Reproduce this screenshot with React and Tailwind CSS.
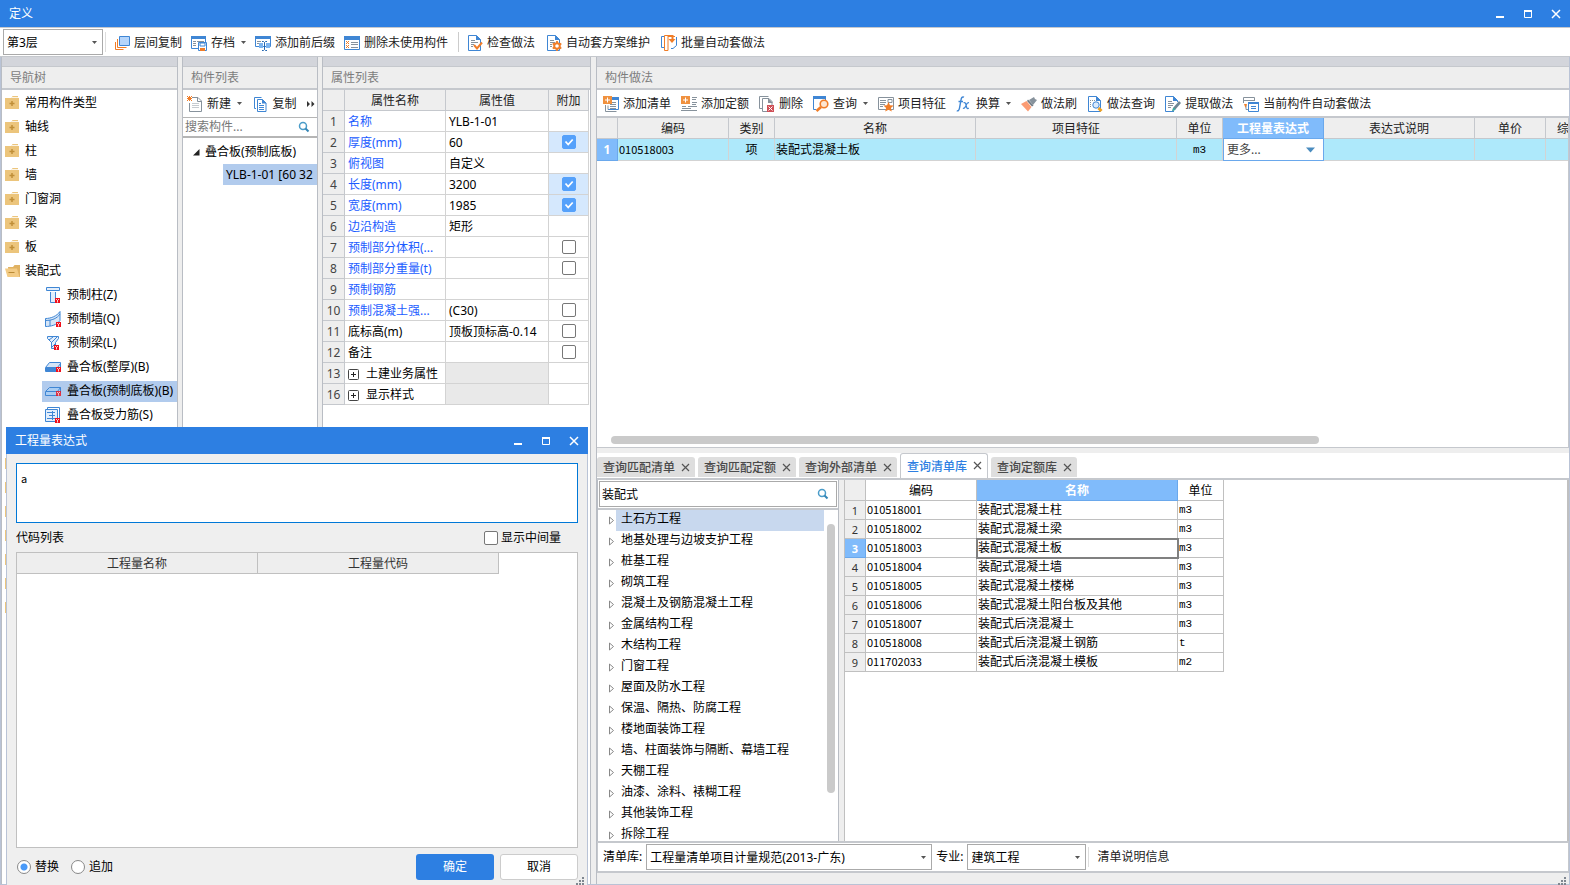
import React from "react";

const B = "#3f86d4";
const O = "#f07d28";
const G = "#87929c";

function Svg({ children, w = 16, h = 16, className = "" }) {
  return (
    <svg width={w} height={h} viewBox={`0 0 ${w} ${h}`} fill="none" className={`shrink-0 ${className}`} aria-hidden="true">
      {children}
    </svg>
  );
}

const Caret = ({ className = "text-[#555]" }) => (
  <svg width="5" height="3" viewBox="0 0 5 3" className={`shrink-0 ${className}`} aria-hidden="true">
    <path d="M0 0h5L2.500 3z" fill="currentColor" />
  </svg>
);

const page = "M1.500 .5h8l4 4v11h-12z";

const icons = {
  floorCopy: (
    <Svg>
      <path d="M5.500 1.500h10v9h-10z" fill="#b5d5fb" stroke={B} />
      <path d="M3.500 4v8.500h9M1.500 7v7.500h8" stroke={O} />
    </Svg>
  ),
  archive: (
    <Svg>
      <path d="M.5 1.500h14v12H.5z" fill="#fff" stroke={B} />
      <path d="M0 1h15v3H0z" fill={B} />
      <path d="M2 6.500h3M2 8.500h3M2 10.500h3M6 6.500h7" stroke={G} />
      <path d="M7.500 7.500h8v8h-8z" fill="#fff" stroke={B} />
      <path d="M9 8h5v3H9z" fill="#fff" stroke={B} />
      <path d="M9 13h5v3H9z" fill={O} />
    </Svg>
  ),
  affix: (
    <Svg>
      <path d="M.5 1.500h15v10H.5z" fill="#fff" stroke={B} />
      <path d="M0 1h16v3H0z" fill={B} />
      <path d="M2 6.500h4M2 8.500h3" stroke={G} />
      <path d="M4 8h4v5H4zM11 8h4v5h-4z" fill="#7db4ee" />
      <path d="M7 6.500h1.500l1 1 1-1H12M9.500 7.500v7M7 15.500h1.500l1-1 1 1H12" stroke="#2466b0" />
    </Svg>
  ),
  unused: (
    <Svg>
      <path d="M.5 1.500h15v13H.5z" fill="#fff" stroke={B} />
      <path d="M0 1h16v4H0z" fill={B} />
      <path d="M2 6h1v1H2zM4 6h1v1H4zM3 7h1v1H3zM2 8h1v1H2zM4 8h1v1H4zM2 10h1v1H2zM4 10h1v1H4zM3 11h1v1H3zM2 12h1v1H2zM4 12h1v1H4z" fill={O} />
      <path d="M7 7.500h7M7 9.500h7M7 12.500h7" stroke={G} />
    </Svg>
  ),
  check: (
    <Svg>
      <path d={page} fill="#fff" stroke={B} />
      <path d="M9 0l5 5H9z" fill={B} />
      <path d="M4 5.500h4M4 7.500h7M4 9.500h3M4 11.500h2" stroke={G} />
      <path d="M7 10l3 3.500 5-6" stroke={O} strokeWidth="2" />
    </Svg>
  ),
  gearDoc: (
    <Svg>
      <path d={page} fill="#fff" stroke={B} />
      <path d="M9 0l5 5H9z" fill={B} />
      <path d="M4 5.500h4M4 7.500h5M4 9.500h2M4 11.500h2" stroke={G} />
      <circle cx="11" cy="11" r="2.800" fill="#fff" stroke={O} strokeWidth="2" />
      <path d="M11 6v2M11 14v2M6.700 8.500l1.600 1M13.700 12.500l1.600 1M6.700 13.500l1.600-1M13.700 9.500l1.600-1" stroke={O} strokeWidth="1.800" />
    </Svg>
  ),
  batch: (
    <Svg>
      <path d="M3 1.500H.5v11H3M10 13.500h2l3.500-3V2" stroke={B} />
      <path d="M3.500.5H7v15H3.500zM7 1.500h7" stroke={O} />
      <path d="M7 .5h4.500v4" stroke={O} strokeWidth="2" />
      <path d="M7.500 4h7L11 8z" fill={O} />
    </Svg>
  ),
  addList: (
    <Svg>
      <path d="M10 1.500h5.500v12H5" stroke={B} />
      <path d="M9 1h7v3H9z" fill={B} />
      <path d="M2.500 9v6.500h11" stroke={G} />
      <path d="M5 9.500v4M7 10.500h6M7 8.500h6M9 6.500h4M7 12.500h6" stroke={G} />
      <path d="M0 0h9v8H0z" fill="#f0913f" />
      <path d="M4.500 1.500v5M2 4h5" stroke="#fff" />
    </Svg>
  ),
  addQuota: (
    <Svg>
      <path d="M11 1.500h5M11 3.500h4M11 6.500h5M11 8.500h4M1 10.500h4M7 10.500h9M1 12.500h9M0 14.500h16" stroke={G} />
      <path d="M0 0h9v8H0z" fill="#f0913f" />
      <path d="M4.500 1.500v5M2 4h5" stroke="#fff" />
    </Svg>
  ),
  remove: (
    <Svg>
      <path d="M3 12.500H.5V.5h9" stroke={G} />
      <path d="M9 15.500H3.500V2.500H10l3 3V9" fill="#fff" stroke={G} />
      <path d="M9 2l5 5H9z" fill={G} />
      <path d="M8 9h7v7H8z" fill="#cf4f57" />
      <path d="M9.500 10.500l4 4M13.500 10.500l-4 4" stroke="#fff" />
    </Svg>
  ),
  query: (
    <Svg>
      <path d="M3 13.500H.5V1.500h12V4" stroke={B} />
      <path d="M0 0h13v3H0z" fill={B} />
      <circle cx="11" cy="8" r="3.800" fill="#fde6d2" stroke={O} strokeWidth="1.600" />
      <path d="M8 11l-4.500 4" stroke={O} strokeWidth="2.600" />
    </Svg>
  ),
  feature: (
    <Svg>
      <path d="M.5 1.500h15v12H.5z" fill="#fff" stroke={G} />
      <path d="M2 4.500h6M2 6.500h6M2 8.500h5M2 10.500h3M10 3.500h4v3h-4z" stroke={G} />
      <path d="M10.500 6l1.500 3.300 3.700.3-2.800 2.400.9 3.600-3.300-1.900-3.300 1.900.9-3.600L5.400 9.600l3.600-.3z" fill={O} />
    </Svg>
  ),
  fx: (
    <Svg>
      <path d="M8 1.200C6 .2 5.300 2 4.900 4.500L3.500 12c-.4 2.500-1.500 3.400-2.700 2.600M2.500 5.500h4.500" stroke={B} strokeWidth="1.400" />
      <path d="M7.500 6.800c2-1 2.300 1 2.800 3.200s1 3.500 2.400 2M13 6.700c-1.600-.4-2.300 1-3 2.700s-1.700 3.600-3 2.700" stroke={B} strokeWidth="1.200" />
    </Svg>
  ),
  brush: (
    <Svg>
      <path d="M8 4l5-3 1 2 2 1-4 5z" fill={G} />
      <path d="M7 3.500l5.500 6-1.500 1L6 5z" fill="#6f7a84" />
      <path d="M5.500 5l5 6-3.500 4.500L0 8z" fill="#fb9c74" />
    </Svg>
  ),
  docSearch: (
    <Svg>
      <path d={page} fill="#fff" stroke={B} />
      <path d="M9 0l5 5H9z" fill={B} />
      <path d="M3 4.500h5M3 6.500h2M3 8.500h2M3 10.500h2" stroke={G} strokeDasharray="1 1" />
      <circle cx="9" cy="9" r="3.200" fill="#dbeafc" stroke={B} />
      <path d="M11.500 12l3 3" stroke="#f0a020" strokeWidth="3" />
    </Svg>
  ),
  extract: (
    <Svg>
      <path d="M9 15.500H.5V.5h8l4 4V6" fill="#fff" stroke={B} />
      <path d="M8 0l5 5H8z" fill={B} />
      <path d="M3 5.500h4M3 7.500h6M3 9.500h5M3 11.500h3" stroke={G} />
      <path d="M14 5l2 2-6 7-3 1.500L8 12z" fill="#6f8794" />
      <path d="M8.500 11.500l2 2-3.500 2z" fill="#35b3a6" />
    </Svg>
  ),
  autoCurrent: (
    <Svg>
      <path d="M.5 7V1.500h11V5M.5 4.500h11" stroke={G} />
      <path d="M3 9v4.500h2" stroke={G} />
      <path d="M1 8l3 0-1.500 4z" fill={O} />
      <path d="M5.500 6.500h10v9h-10z" fill="#fff" stroke={B} />
      <path d="M5 6h11v2H5z" fill={B} />
      <path d="M8 10.500h5M8 12.500h5" stroke={B} />
    </Svg>
  ),
  create: (
    <Svg>
      <path d="M5 1.500h6l3.500 3.500v10.500h-12V7" fill="#fff" stroke={G} />
      <path d="M10.500 1v4.500H15" stroke={G} />
      <path d="M5 7.500h7M5 9.500h7M5 11.500h7" stroke="#c6cbd0" />
      <path d="M0 0h1v1H0zM2 0h1v1H2zM4 0h1v1H4zM1 1h3v1H1zM0 2h5v1H0zM1 3h3v1H1zM0 4h1v1H0zM2 4h1v1H2zM4 4h1v1H4z" fill={O} />
    </Svg>
  ),
  copy: (
    <Svg>
      <path d="M3 12.500H1.500V1.500h7" stroke={B} />
      <path d="M4.500 3.500h5l3.500 3.500v8.500H4.500z" fill="#fff" stroke={B} />
      <path d="M9 3l4.500 4.500H9z" fill={B} />
      <path d="M6 7.500h2M6 9.500h5M6 11.500h5M6 13.500h5" stroke={B} />
    </Svg>
  ),
};

const Badge = ({ x = 11, y = 11 }) => (
  <g>
    <path d={`M${x} ${y}h5v5h-5z`} fill="#f0101c" />
    <path d={`M${x + 1} ${y + 1}l1.500 1.500 1.500-1.500M${x + 2.5} ${y + 2.5}v2`} stroke="#fff" strokeWidth=".8" />
  </g>
);

const partIcons = {
  column: (
    <Svg>
      <path d="M1.500.5h13v3h-13z" fill="#e3eefb" stroke={B} />
      <path d="M4.500 3.500h7M5.500 5v10.500h5V5" fill="#e3eefb" stroke={B} />
      <Badge x={10} />
    </Svg>
  ),
  wall: (
    <Svg>
      <path d="M.5 7.500C6 7.500 12 5 15 .5v9c-3 4.500-9 6-14.500 6z" fill="#d5e5f7" stroke={B} />
      <path d="M.5 9.500C7 9.500 12 7.500 15 3M5 9v6" stroke={B} />
      <Badge />
    </Svg>
  ),
  beam: (
    <Svg>
      <path d="M2.500 1.500h11v2l-3 4v6h-4v-6l-4-4z" fill="#e3eefb" stroke={B} />
      <path d="M4 5l4-3M6 8l6-6M7 12l3-3" stroke={B} />
      <Badge x={9} y={10} />
    </Svg>
  ),
  slab: (
    <Svg>
      <path d="M.5 8.500l4-5h11v6l-3 3H.5z" fill="#d5e5f7" stroke={B} />
      <path d="M1 8h11v4H1z" fill={B} />
      <path d="M12.500 8.500l3-4" stroke={B} />
      <Badge y={8} />
    </Svg>
  ),
  slabBase: (
    <Svg>
      <path d="M.5 8.500l4-4h11v5l-3 3H.5z" fill="#a9cdf3" stroke={B} />
      <path d="M1 8.500h11.500l3-4" stroke={B} />
      <g opacity=".8">
        <Badge y={8} />
      </g>
    </Svg>
  ),
  rebar: (
    <Svg>
      <path d="M2.500 2.500v-2h12v13" stroke={B} />
      <path d="M.5 2.500h12v12H.5z" fill="#e3eefb" stroke={B} />
      <path d="M2 5.500h8M4 8.500h6M2 11.500h8M7.500 4v9" stroke={B} />
      <Badge x={10} />
    </Svg>
  ),
};

const Folder = ({ open }) =>
  open ? (
    <Svg>
      <path d="M3 4h5l1.500-2H15v12H4z" fill="#e0b263" />
      <path d="M0 5.500h12l2.500 8.500H2.500z" fill="#f3cb84" />
      <path d="M3.500 9.500h6" stroke="#b98a35" />
    </Svg>
  ) : (
    <Svg>
      <path d="M0 3h6.500l1-2H13v2h1v11H0z" fill="#ecc57c" />
      <path d="M7 2.500h6" stroke="#fff" strokeWidth=".8" />
      <path d="M7 6v5M4.500 8.500h5" stroke="#c08f38" strokeWidth="1.500" />
    </Svg>
  );

const Magnifier = () => (
  <Svg w={12} h={12}>
    <circle cx="5" cy="5" r="3.500" stroke="#4a9cc9" strokeWidth="1.500" />
    <path d="M7.500 7.500l3 3" stroke="#3585b5" strokeWidth="2" />
  </Svg>
);

function Tool({ icon, label, drop }) {
  return (
    <button type="button" className="flex shrink-0 items-center gap-1 whitespace-nowrap text-[#222]">
      {icons[icon]}
      {label}
      {drop && <Caret className="ml-[2px] text-[#555]" />}
    </button>
  );
}

function WindowButtons() {
  const cls = "flex h-5 w-7 items-center justify-center text-white";
  return (
    <div className="flex items-center">
      <button type="button" aria-label="最小化" className={cls}>
        <Svg w={10} h={10}><path d="M1 8h8" stroke="currentColor" strokeWidth="2" /></Svg>
      </button>
      <button type="button" aria-label="最大化" className={cls}>
        <Svg w={10} h={10}><path d="M1.500 2v6.500h7V2" stroke="currentColor" /><path d="M1 2h8" stroke="currentColor" strokeWidth="2" /></Svg>
      </button>
      <button type="button" aria-label="关闭" className={cls}>
        <Svg w={10} h={10}><path d="M1 1l8 8M9 1l-8 8" stroke="currentColor" strokeWidth="1.500" /></Svg>
      </button>
    </div>
  );
}

function Select({ label, value, className = "", caret }) {
  return (
    <div className={`relative flex items-center bg-white ${className}`}>
      <select aria-label={label} className="h-full w-full appearance-none bg-transparent pl-[3px] pr-4 pt-px outline-none">
        <option>{value}</option>
      </select>
      <span className="pointer-events-none absolute right-[5px] flex">{caret || <Caret />}</span>
    </div>
  );
}

function Check({ label, checked, id }) {
  return (
    <span className="relative inline-flex h-[14px] w-[14px]">
      <input
        id={id}
        type="checkbox"
        aria-label={label}
        defaultChecked={checked}
        className="peer h-[14px] w-[14px] appearance-none rounded-[2px] border border-[#777] bg-white checked:border-[#55a1fb] checked:bg-[#55a1fb]"
      />
      <svg viewBox="0 0 14 14" className="pointer-events-none absolute inset-0 hidden h-[14px] w-[14px] peer-checked:block" aria-hidden="true">
        <path d="M3.500 6.500l2.700 3 4.500-5" fill="none" stroke="#fff" strokeWidth="1.800" />
      </svg>
    </span>
  );
}

function Panel({ title, className = "", children }) {
  return (
    <section className={`flex min-h-0 flex-col border-l border-[#b9bdc4] ${className}`}>
      <div className="h-[9px] shrink-0 bg-[#d3d5db]" />
      <h2 className="flex h-6 shrink-0 items-center border-t border-b-2 border-[#c5c8cd] bg-[#eee] pl-2 pt-px text-[#7d7d7d]">{title}</h2>
      {children}
    </section>
  );
}

const folders = ["常用构件类型", "轴线", "柱", "墙", "门窗洞", "梁", "板"];
const parts = [
  ["column", "预制柱(Z)"],
  ["wall", "预制墙(Q)"],
  ["beam", "预制梁(L)"],
  ["slab", "叠合板(整厚)(B)"],
  ["slabBase", "叠合板(预制底板)(B)", true],
  ["rebar", "叠合板受力筋(S)"],
];

const props = [
  [1, "名称", "YLB-1-01", null],
  [2, "厚度(mm)", "60", true],
  [3, "俯视图", "自定义", null],
  [4, "长度(mm)", "3200", true],
  [5, "宽度(mm)", "1985", true],
  [6, "边沿构造", "矩形", null],
  [7, "预制部分体积(...", "", false],
  [8, "预制部分重量(t)", "", false],
  [9, "预制钢筋", "", null],
  [10, "预制混凝土强...", "(C30)", false],
  [11, "底标高(m)", "顶板顶标高-0.14", false],
  [12, "备注", "", false],
  [13, "土建业务属性", "", null, true],
  [16, "显示样式", "", null, true],
];

const tabs = ["查询匹配清单", "查询匹配定额", "查询外部清单", "查询清单库", "查询定额库"];
const chapters = [
  "土石方工程", "地基处理与边坡支护工程", "桩基工程", "砌筑工程", "混凝土及钢筋混凝土工程", "金属结构工程",
  "木结构工程", "门窗工程", "屋面及防水工程", "保温、隔热、防腐工程", "楼地面装饰工程",
  "墙、柱面装饰与隔断、幕墙工程", "天棚工程", "油漆、涂料、裱糊工程", "其他装饰工程", "拆除工程",
];
const items = [
  ["010518001", "装配式混凝土柱", "m3"],
  ["010518002", "装配式混凝土梁", "m3"],
  ["010518003", "装配式混凝土板", "m3"],
  ["010518004", "装配式混凝土墙", "m3"],
  ["010518005", "装配式混凝土楼梯", "m3"],
  ["010518006", "装配式混凝土阳台板及其他", "m3"],
  ["010518007", "装配式后浇混凝土", "m3"],
  ["010518008", "装配式后浇混凝土钢筋", "t"],
  ["011702033", "装配式后浇混凝土模板", "m2"],
];

const CODE = "text-[11px] font-['Noto_Sans_CJK_SC',sans-serif]";
const UNIT = "text-[11px] font-['Liberation_Mono',monospace]";

function NavTree() {
  return (
    <Panel title="导航树" className="w-[177px] shrink-0 border-r">
      <ul className="min-h-0 flex-1 overflow-hidden bg-white pt-px">
        {folders.map((f) => (
          <li key={f} className="flex h-6 items-center gap-1 pl-[3px]"><Folder />{f}</li>
        ))}
        <li>
          <div className="flex h-6 items-center gap-1 pl-[3px]"><Folder open />装配式</div>
          <ul>
            {parts.map(([icon, name, on]) => (
              <li key={name} className="flex h-6 items-center pl-10">
                <span className={`flex h-[21px] flex-1 items-center gap-[6px] whitespace-nowrap pl-[3px] ${on ? "bg-[#b1cbed]" : ""}`}>
                  {partIcons[icon]}{name}
                </span>
              </li>
            ))}
          </ul>
        </li>
        <li className="h-6" />
        {[0, 1, 2, 3, 4, 5, 6].map((i) => (
          <li key={i} className="flex h-6 items-center pl-[3px]"><Folder /></li>
        ))}
      </ul>
    </Panel>
  );
}

function PartList() {
  return (
    <Panel title="构件列表" className="w-[136px] shrink-0 border-r">
      <div className="flex h-[27px] shrink-0 items-center justify-between bg-white pl-1 pr-[2px]">
        <Tool icon="create" label="新建" drop />
        <Tool icon="copy" label="复制" />
        <button type="button" aria-label="更多" className="flex">
          <Svg w={8} h={6}><path d="M0 0l3 3-3 3zM4.500 0l3 3-3 3z" fill="#333" /></Svg>
        </button>
      </div>
      <label className="flex h-[21px] shrink-0 items-center border-t border-b-2 border-[#b5b5b5] bg-white pr-[7px]">
        <input placeholder="搜索构件..." aria-label="搜索构件" className="w-full min-w-0 pl-[2px] outline-none placeholder:text-[#777]" />
        <Magnifier />
      </label>
      <ul className="min-h-0 flex-1 overflow-hidden bg-white pt-[2px]">
        <li>
          <div className="flex h-6 items-center gap-[5px] pl-[10px]">
            <Svg w={7} h={7}><path d="M6.500 0v6.500H0z" fill="#222" /></Svg>叠合板(预制底板)
          </div>
          <div className="ml-10 h-[21px] overflow-hidden whitespace-nowrap bg-[#b1cbed] pl-[3px] leading-[21px]">YLB-1-01 [60 32</div>
        </li>
      </ul>
    </Panel>
  );
}

function Properties() {
  const th = "border-b border-r border-[#c5c8cd] bg-[#eee] p-0 pt-[2px] font-normal text-[#222]";
  return (
    <Panel title="属性列表" className="w-[269px] shrink-0 border-r">
      <div className="min-h-0 flex-1 overflow-hidden bg-white">
        <table className="w-[266px] table-fixed border-separate border-spacing-0">
          <colgroup><col className="w-[22px]" /><col className="w-[101px]" /><col className="w-[103px]" /><col className="w-10" /></colgroup>
          <thead>
            <tr className="h-[21px]">
              <th className={th} aria-label="序号" /><th className={th}>属性名称</th><th className={th}>属性值</th><th className={th}>附加</th>
            </tr>
          </thead>
          <tbody>
            {props.map(([n, name, value, extra, group]) => (
              <tr key={n} className="h-[21px]">
                <th className="border-b border-r border-[#c5c8cd] bg-[#eee] p-0 pt-[2px] font-normal text-[#444]">{n}</th>
                <td className={`truncate border-b border-r border-[#d3d3d3] p-0 pl-[3px] pt-[2px] ${n < 11 ? "text-[#1b5cff]" : "text-black"}`}>
                  {group ? (
                    <span className="flex items-center gap-[7px]">
                      <button type="button" aria-label={`展开${name}`} className="flex">
                        <Svg w={11} h={11}><rect x=".5" y=".5" width="10" height="10" rx="1" stroke="#444" /><path d="M3 5.500h5M5.500 3v5" stroke="#222" /></Svg>
                      </button>
                      {name}
                    </span>
                  ) : name}
                </td>
                <td className={`whitespace-nowrap border-b border-r border-[#d3d3d3] p-0 pl-[3px] pt-[2px] ${group ? "bg-[#e9e9e9]" : ""}`}>{value}</td>
                <td className={`border-b border-r border-[#d3d3d3] p-0 ${extra ? "bg-[#d5e8fd]" : ""}`}>
                  {extra !== null && <span className="flex justify-center"><Check label={`附加${name}`} checked={extra} /></span>}
                </td>
              </tr>
            ))}
          </tbody>
        </table>
      </div>
    </Panel>
  );
}

function PracticeTable() {
  const th = "border-b border-r border-[#c5c8cd] bg-[#eee] p-0 pt-[2px] font-normal text-[#222] whitespace-nowrap overflow-hidden";
  const td = "border-b border-r border-[#d3d3d3] bg-[#aee9fb] p-0 whitespace-nowrap";
  return (
    <div className="flex min-h-0 flex-col overflow-hidden border-b border-r border-[#c5c8cd] bg-white">
      <table className="w-[1046px] table-fixed border-separate border-spacing-0">
        <colgroup>
          <col className="w-[21px]" /><col className="w-[111px]" /><col className="w-[46px]" /><col className="w-[201px]" /><col className="w-[201px]" />
          <col className="w-[46px]" /><col className="w-[101px]" /><col className="w-[151px]" /><col className="w-[71px]" /><col className="w-[97px]" />
        </colgroup>
        <thead>
          <tr className="h-[21px]">
            <th className={th} aria-label="序号" /><th className={th}>编码</th><th className={th}>类别</th><th className={th}>名称</th><th className={th}>项目特征</th><th className={th}>单位</th>
            <th className="border-b border-r border-[#6aa8ec] bg-[#80bbfb] p-0 pt-[2px] font-bold text-white">工程量表达式</th>
            <th className={th}>表达式说明</th><th className={th}>单价</th><th className={`${th} pl-[11px] text-left`}>综合单价</th>
          </tr>
        </thead>
        <tbody>
          <tr className="h-[22px]">
            <th className="border-b border-r border-[#6aa8ec] bg-[#80bbfb] p-0 font-bold text-white">1</th>
            <td className={`${td} pb-[2px] pl-[1px] ${CODE}`}>010518003</td>
            <td className={`${td} text-center`}>项</td>
            <td className={`${td} pl-[1px]`}>装配式混凝土板</td>
            <td className={td} />
            <td className={`${td} text-center ${UNIT}`}>m3</td>
            <td className="border border-t-0 border-[#6aa8ec] bg-white p-0">
              <Select label="工程量表达式" value="更多..." className="h-5 text-[#444]" caret={
                <Svg w={15} h={6}><path d="M3 .5h9l-4.500 5z" fill="#4a8cbf" /></Svg>
              } />
            </td>
            <td className={td} /><td className={td} /><td className={td} />
          </tr>
        </tbody>
      </table>
      <div className="flex flex-1 items-end pb-[3px] pl-[14px]">
        <div className="h-2 w-[74%] rounded-full bg-[#cacaca]" />
      </div>
    </div>
  );
}

function QueryPane() {
  const th = "border-b border-r border-[#c0c0c0] p-0";
  return (
    <div className="flex min-h-0 flex-col">
      <div className="flex h-[25px] shrink-0 items-end gap-[3px] bg-white" role="tablist">
        {tabs.map((t, i) => {
          const on = i === 3;
          return (
            <div key={t} className={on
              ? "flex h-[25px] items-center gap-1 rounded-t-[3px] border border-b-0 border-[#c5c8cd] bg-white pl-[6px] pr-1 pt-px font-medium text-[#2d7fe2]"
              : "mb-px flex h-5 items-center gap-1 rounded-t-[3px] bg-[#dedede] pl-[6px] pr-1 pt-[2px] font-medium text-[#4a4a4a]"}>
              <button type="button" role="tab" aria-selected={on}>{t}</button>
              <button type="button" aria-label={`关闭${t}`} className="flex h-3 w-3 items-center justify-center pb-[2px] text-[#555]">
                <Svg w={9} h={9}><path d="M1 1l7 7M8 1L1 8" stroke="currentColor" strokeWidth="1.200" /></Svg>
              </button>
            </div>
          );
        })}
      </div>
      <div className="flex min-h-0 flex-1 border-y-2 border-[#c5c8cd]">
        <div className="flex w-[242px] shrink-0 flex-col border-x border-[#b9bdc4] bg-white">
          <div className="border-b-2 border-[#c5c8cd] p-px">
            <label className="flex h-[26px] items-center border border-[#aaa] pr-[7px]">
              <input defaultValue="装配式" aria-label="查询清单库" className="w-full min-w-0 pl-[2px] pt-px outline-none" />
              <Magnifier />
            </label>
          </div>
          <div className="flex min-h-0 flex-1 overflow-hidden">
            <ul className="min-h-0 flex-1">
              {chapters.map((c, i) => (
                <li key={c} className="flex h-[21px] items-center gap-[2px] pl-[11px]">
                  <Svg w={5} h={9}><path d="M.5 1v7l4-3.500z" stroke="#888" /></Svg>
                  <span className={`h-[21px] flex-1 pl-[5px] leading-[17px] ${i === 0 ? "bg-[#c8d8ee]" : ""}`}>{c}</span>
                </li>
              ))}
            </ul>
            <div className="w-[14px] pl-[3px] pt-[14px]"><div className="h-[85%] w-2 rounded-full bg-[#cacaca]" /></div>
          </div>
        </div>
        <div className="w-[5px] shrink-0 bg-[#eee]" />
        <div className="min-w-0 flex-1 border-l border-r-2 border-[#c0c0c0] bg-white">
          <table className="w-[379px] table-fixed border-separate border-spacing-0">
            <colgroup><col className="w-[21px]" /><col className="w-[111px]" /><col className="w-[201px]" /><col className="w-[46px]" /></colgroup>
            <thead>
              <tr className="h-[21px]">
                <th className={`${th} bg-[#eee]`} aria-label="序号" />
                <th className={`${th} pt-[2px] font-normal`}>编码</th>
                <th className="border-b border-r border-[#6aa8ec] bg-[#80bbfb] p-0 pt-[2px] font-bold text-white">名称</th>
                <th className={`${th} pt-[2px] font-normal`}>单位</th>
              </tr>
            </thead>
            <tbody>
              {items.map(([code, name, unit], i) => (
                <tr key={code} className="h-[19px] leading-4">
                  <th className={i === 2
                    ? "border-b border-r border-[#6aa8ec] bg-[#80bbfb] p-0 pt-[2px] text-[11px] font-bold text-white"
                    : `${th} bg-[#eee] pt-[2px] text-[11px] font-normal text-[#333]`}>{i + 1}</th>
                  <td className={`${th} pb-[2px] pl-[1px] ${CODE}`}>{code}</td>
                  <td className={`${th} pl-[1px] ${i === 2 ? "outline-2 -outline-offset-1 outline-[#808080]" : ""}`}>{name}</td>
                  <td className={`${th} pl-[1px] ${UNIT}`}>{unit}</td>
                </tr>
              ))}
            </tbody>
          </table>
        </div>
      </div>
      <div className="flex h-[30px] shrink-0 items-center border-b-2 border-l border-r border-[#c5c8cd] bg-white pl-[5px] text-black">
        清单库:
        <Select label="清单库" value="工程量清单项目计量规范(2013-广东)" className="ml-1 h-[26px] w-[286px] border border-[#aaa]" />
        <span className="ml-1">专业:</span>
        <Select label="专业" value="建筑工程" className="ml-1 h-[26px] w-[119px] border border-[#aaa]" />
        <span className="ml-[2px] h-5 w-px bg-[#ddd]" />
        <button type="button" className="ml-2 text-[#222]">清单说明信息</button>
      </div>
    </div>
  );
}

function ExpressionDialog() {
  const th = "border-b border-r border-[#c0c0c0] bg-[#eee] p-0 pt-[2px] font-normal text-[#333]";
  const radio = "h-[14px] w-[14px] appearance-none rounded-full border border-[#888] bg-white checked:bg-[radial-gradient(circle,#4a9af8_3px,white_4px)]";
  return (
    <div role="dialog" aria-label="工程量表达式" className="absolute bottom-0 left-[6px] top-[427px] flex w-[582px] flex-col bg-[#efefef]">
      <header className="flex h-[27px] shrink-0 items-center justify-between bg-[#2d7fe2] pl-[9px] text-white">
        工程量表达式<WindowButtons />
      </header>
      <div className="flex min-h-0 flex-1 flex-col border-x border-[#b9c3d6] px-[9px] pt-[9px]">
        <textarea aria-label="表达式" defaultValue="a" className={`h-[60px] shrink-0 resize-none border border-[#0078d7] bg-white px-1 py-[6px] leading-4 outline-none ${CODE}`} />
        <div className="flex h-[29px] shrink-0 items-center justify-between pr-[17px]">
          代码列表
          <label className="flex items-center gap-[3px]"><Check />显示中间量</label>
        </div>
        <div className="min-h-0 flex-1 border border-[#c0c0c0] bg-white">
          <table className="w-[482px] table-fixed border-separate border-spacing-0">
            <thead><tr className="h-[21px]"><th className={th}>工程量名称</th><th className={th}>工程量代码</th></tr></thead>
          </table>
        </div>
        <div className="flex h-[37px] shrink-0 items-center gap-3">
          <label className="flex items-center gap-1 pl-px"><input type="radio" name="mode" defaultChecked className={radio} />替换</label>
          <label className="flex items-center gap-1"><input type="radio" name="mode" className={radio} />追加</label>
          <div className="ml-auto flex gap-[6px]">
            <button type="button" className="h-[26px] w-[78px] rounded-[3px] bg-[#2d7fe2] text-white">确定</button>
            <button type="button" className="h-[26px] w-[78px] rounded-[3px] border border-[#ccc] bg-white">取消</button>
          </div>
        </div>
      </div>
      <Grip />
    </div>
  );
}

const Grip = () => (
  <Svg w={8} h={8} className="absolute bottom-0 right-1">
    <path d="M6 0h2v2H6zM3 3h2v2H3zM6 3h2v2H6zM0 6h2v2H0zM3 6h2v2H3zM6 6h2v2H6z" fill="#7f8790" />
  </Svg>
);

export default function App() {
  return (
    <div className="relative flex h-screen min-w-[1200px] flex-col overflow-hidden bg-[#eee] text-[12px] leading-4 text-black font-['Noto_Sans','Noto_Sans_CJK_SC',sans-serif]">
      <header className="flex h-[27px] shrink-0 items-center justify-between bg-[#2d7fe2] pl-[9px] text-white">
        定义<WindowButtons />
      </header>
      <div className="flex h-[30px] shrink-0 items-center border-b border-t border-[#c5c8cd] bg-white pl-[3px]">
        <Select label="楼层" value="第3层" className="h-[26px] w-[100px] border border-[#aaa]" />
        <span className="ml-[2px] h-5 w-px bg-[#ddd]" />
        <div className="ml-2 flex gap-[9px] pt-px">
          <Tool icon="floorCopy" label="层间复制" />
          <Tool icon="archive" label="存档" drop />
          <Tool icon="affix" label="添加前后缀" />
          <Tool icon="unused" label="删除未使用构件" />
        </div>
        <span className="ml-[10px] h-5 w-px bg-[#ccc]" />
        <div className="ml-2 flex gap-[11px] pt-px">
          <Tool icon="check" label="检查做法" />
          <Tool icon="gearDoc" label="自动套方案维护" />
          <Tool icon="batch" label="批量自动套做法" />
        </div>
      </div>
      <main className="flex min-h-0 flex-1 border-b border-l border-r border-[#b9c3d6]">
        <NavTree />
        <div className="w-1 shrink-0" />
        <PartList />
        <div className="w-1 shrink-0" />
        <Properties />
        <div className="w-[5px] shrink-0" />
        <Panel title="构件做法" className="min-w-0 flex-1">
          <div className="flex h-7 shrink-0 items-center gap-[10px] overflow-hidden border-b-2 border-[#c5c8cd] bg-white pl-[6px] pt-px">
            <Tool icon="addList" label="添加清单" />
            <Tool icon="addQuota" label="添加定额" />
            <Tool icon="remove" label="删除" />
            <Tool icon="query" label="查询" drop />
            <Tool icon="feature" label="项目特征" />
            <Tool icon="fx" label="换算" drop />
            <Tool icon="brush" label="做法刷" />
            <Tool icon="docSearch" label="做法查询" />
            <Tool icon="extract" label="提取做法" />
            <Tool icon="autoCurrent" label="当前构件自动套做法" />
          </div>
          <div className="grid min-h-0 flex-1 grid-rows-[330fr_420fr] gap-[5px] pb-[11px]">
            <PracticeTable />
            <QueryPane />
          </div>
        </Panel>
      </main>
      <ExpressionDialog />
      <Grip />
    </div>
  );
}
